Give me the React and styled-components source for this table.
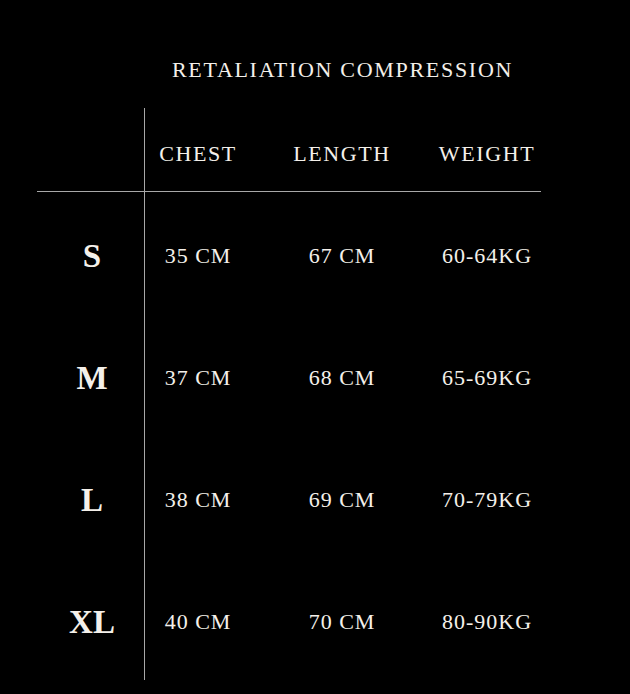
import styled, { createGlobalStyle } from 'styled-components';

const GlobalStyle = createGlobalStyle`
  html, body {
    margin: 0;
    background: #000;
  }
`;

const rows = [
  { size: 'S', chest: '35 CM', length: '67 CM', weight: '60-64KG' },
  { size: 'M', chest: '37 CM', length: '68 CM', weight: '65-69KG' },
  { size: 'L', chest: '38 CM', length: '69 CM', weight: '70-79KG' },
  { size: 'XL', chest: '40 CM', length: '70 CM', weight: '80-90KG' },
];

export default function App() {
  return (
    <Page>
      <GlobalStyle />
      <Title>RETALIATION COMPRESSION</Title>
      <Table>
        <HeaderRow>
          <SizeCell />
          <Cell>CHEST</Cell>
          <Cell>LENGTH</Cell>
          <Cell>WEIGHT</Cell>
        </HeaderRow>
        {rows.map((r) => (
          <BodyRow key={r.size}>
            <SizeCell>{r.size}</SizeCell>
            <Cell $data>{r.chest}</Cell>
            <Cell $data>{r.length}</Cell>
            <Cell $data>{r.weight}</Cell>
          </BodyRow>
        ))}
      </Table>
    </Page>
  );
}

const Page = styled.div`
  width: 630px;
  height: 694px;
  background: #000;
  color: #f4f0ea;
  font-family: 'Liberation Serif', 'Times New Roman', serif;
  padding: 57px 0 0 37px;
  box-sizing: border-box;
  overflow: hidden;
`;

const Title = styled.h1`
  margin: 0 0 25px 135px;
  font-size: 22px;
  font-weight: normal;
  line-height: 26px;
  letter-spacing: 1.7px;
  white-space: nowrap;
`;

const Table = styled.div`
  width: 504px;
  display: flex;
  flex-direction: column;
`;

const Row = styled.div`
  display: grid;
  grid-template-columns: 108px 106px 182px 108px;
  box-sizing: border-box;
`;

const HeaderRow = styled(Row)`
  height: 84px;
  border-bottom: 1px solid #a8a8a8;
  padding-top: 8px;
`;

const BodyRow = styled(Row)`
  height: 122px;
  padding-top: 6px;
`;

const Cell = styled.div`
  display: flex;
  align-items: center;
  justify-content: center;
  font-size: 22px;
  line-height: 26px;
  letter-spacing: ${(p) => (p.$data ? '1px' : '1.6px')};
  white-space: nowrap;
`;

const SizeCell = styled.div`
  display: flex;
  align-items: center;
  justify-content: center;
  border-right: 1px solid #a8a8a8;
  font-size: 33px;
  font-weight: bold;
  margin-top: -8px;
  padding: 8px 0 0 3px;
`;
